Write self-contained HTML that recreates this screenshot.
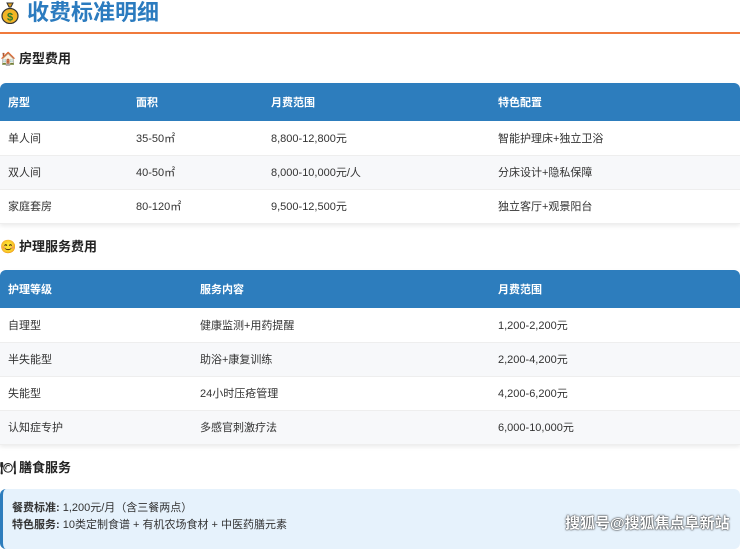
<!DOCTYPE html>
<html><head><meta charset="utf-8"><style>
*{margin:0;padding:0;box-sizing:border-box}
body{width:740px;height:539px;overflow:hidden;background:#fff;font-family:"Liberation Sans","Noto Sans CJK SC",sans-serif;color:#333;position:relative}
.title{position:absolute;left:0;top:0;height:34px;width:740px;border-bottom:2px solid #f07a3c}
.title span{position:absolute;left:27px;top:0px;font-size:22px;font-weight:bold;color:#2b7bbf;line-height:26px}
.bag{position:absolute;left:1px;top:2px;width:18px;height:22px}
.h{position:absolute;left:0;font-size:13px;font-weight:bold;color:#222;line-height:18px}
.h i{font-style:normal;display:inline-block;width:16px;margin-right:3px}
table{position:absolute;left:0;width:740px;border-collapse:collapse;font-size:11px;box-shadow:0 2px 4px rgba(0,0,0,.08)}
th{background:#2d7dbd;color:#fff;text-align:left;font-weight:bold;height:38px;padding-left:8px}
td{height:34px;padding-left:8px;border-bottom:1px solid #eee}
tr:nth-child(odd) td{background:#f7f8fa}
.box{position:absolute;left:0;top:489px;width:740px;height:60px;background:#e6f2fc;border-left:3px solid #2d7dbd;border-radius:6px;font-size:11px;padding:11px 0 0 9px;line-height:17px}
.wm{position:absolute;left:565px;top:512px;color:#fff;font-size:15px;font-weight:bold;text-shadow:0 0 2px #333,0 0 1px #000}
</style></head><body>
<div class="title"><svg class="bag" viewBox="0 0 18 22"><path d="M6 1h6l-2 4h-2z" fill="#e0a020" stroke="#333" stroke-width="1"/><ellipse cx="9" cy="14" rx="8" ry="7.5" fill="#f2b526" stroke="#333" stroke-width="1.2"/><text x="9" y="18.5" font-size="11" font-weight="bold" text-anchor="middle" fill="#2a7a2a" font-family="Liberation Sans">$</text></svg><span>收费标准明细</span></div>
<div class="h" style="top:50px"><i>🏠</i>房型费用</div>
<table style="top:83px;border-radius:6px 6px 0 0">
<tr><th style="width:128px;border-radius:6px 0 0 0">房型</th><th style="width:135px">面积</th><th style="width:227px">月费范围</th><th style="border-radius:0 6px 0 0">特色配置</th></tr>
<tr><td>单人间</td><td>35-50㎡</td><td>8,800-12,800元</td><td>智能护理床+独立卫浴</td></tr>
<tr><td>双人间</td><td>40-50㎡</td><td>8,000-10,000元/人</td><td>分床设计+隐私保障</td></tr>
<tr><td>家庭套房</td><td>80-120㎡</td><td>9,500-12,500元</td><td>独立客厅+观景阳台</td></tr>
</table>
<div class="h" style="top:238px"><i>😊</i>护理服务费用</div>
<table style="top:270px">
<tr><th style="width:192px;border-radius:6px 0 0 0">护理等级</th><th style="width:298px">服务内容</th><th style="border-radius:0 6px 0 0">月费范围</th></tr>
<tr><td>自理型</td><td>健康监测+用药提醒</td><td>1,200-2,200元</td></tr>
<tr><td>半失能型</td><td>助浴+康复训练</td><td>2,200-4,200元</td></tr>
<tr><td>失能型</td><td>24小时压疮管理</td><td>4,200-6,200元</td></tr>
<tr><td>认知症专护</td><td>多感官刺激疗法</td><td>6,000-10,000元</td></tr>
</table>
<div class="h" style="top:459px"><i>🍽</i>膳食服务</div>
<div class="box"><div><b>餐费标准:</b> 1,200元/月（含三餐两点）</div><div><b>特色服务:</b> 10类定制食谱 + 有机农场食材 + 中医药膳元素</div></div>
<div class="wm">搜狐号@搜狐焦点阜新站</div>
</body></html>
